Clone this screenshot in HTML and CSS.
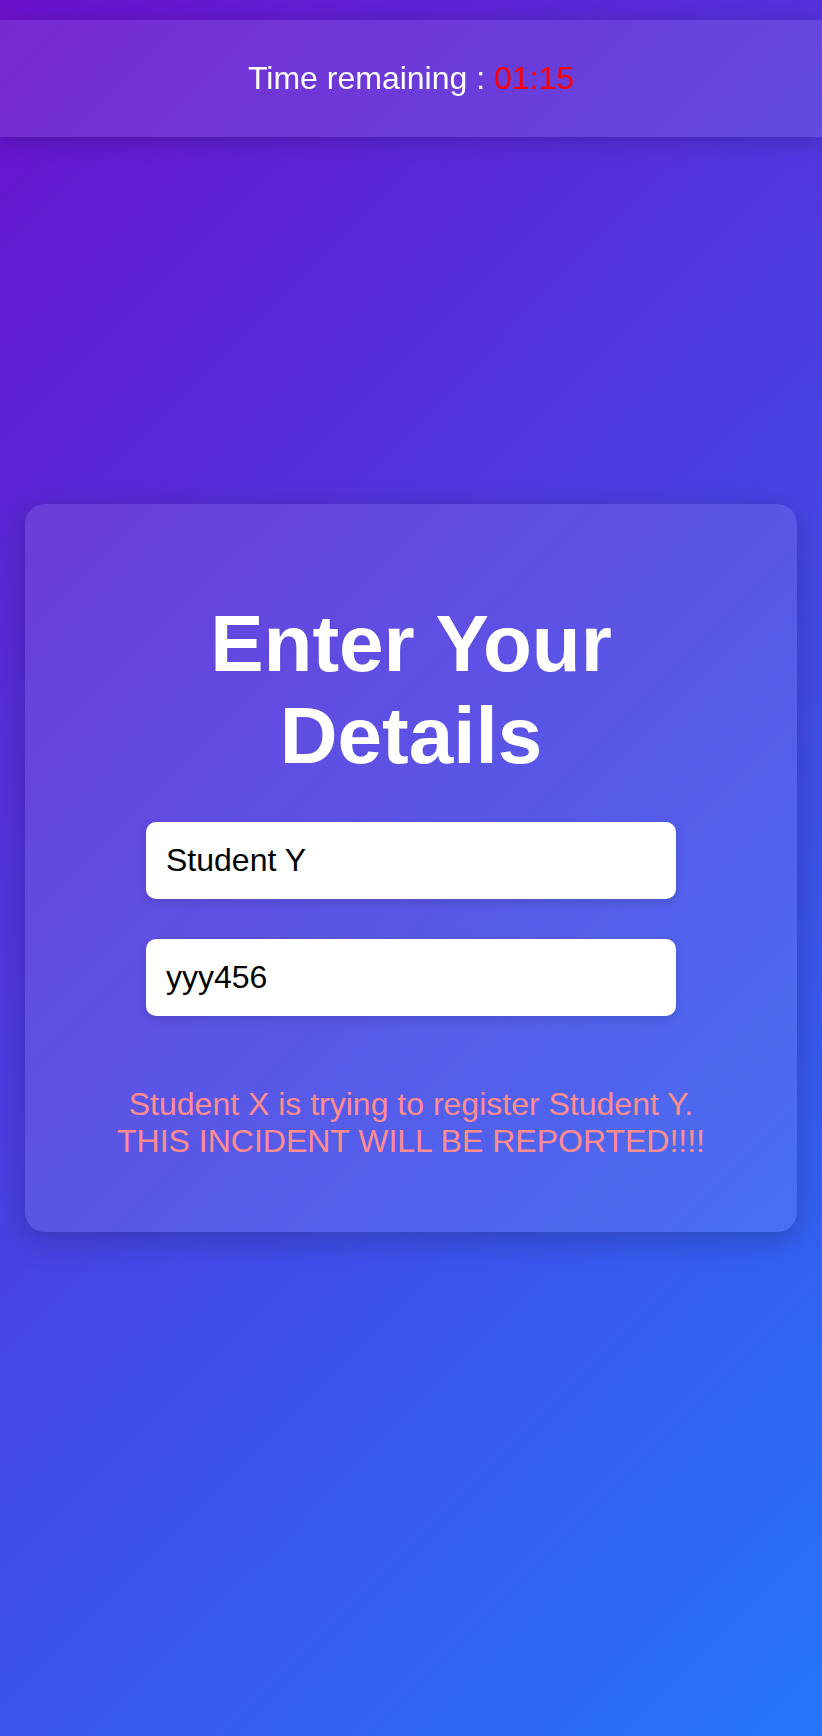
FILE: index.html
```html
<!DOCTYPE html>
<html lang="en">
<head>
<meta charset="utf-8">
<meta name="viewport" content="width=device-width, initial-scale=1">
<title>Enter Your Details</title>
<link rel="stylesheet" href="styles.css">
</head>
<body>
<header class="timer-bar">
  <span class="timer-label">Time remaining : </span><span class="timer-value">01:15</span>
</header>
<main class="page">
  <section class="card">
    <h1 class="card-title">Enter Your Details</h1>
    <form class="details-form">
      <input class="field" type="text" value="Student Y" aria-label="Name">
      <input class="field" type="text" value="yyy456" aria-label="ID">
    </form>
    <p class="warning">Student X is trying to register Student Y.<br>THIS INCIDENT WILL BE REPORTED!!!!</p>
  </section>
</main>
</body>
</html>
```
FILE: styles.css
```css
* {
  box-sizing: border-box;
}

html, body {
  margin: 0;
  padding: 0;
}

body {
  min-height: 100vh;
  font-family: "Liberation Sans", Arial, sans-serif;
  background: linear-gradient(135deg, #6a11cb 0%, #2575fc 100%);
  background-attachment: fixed;
  color: #fff;
}

.timer-bar {
  position: fixed;
  top: 20px;
  left: 0;
  right: 0;
  padding: 40px 20px;
  text-align: center;
  font-size: 32px;
  line-height: normal;
  background: rgba(255, 255, 255, 0.1);
  box-shadow: 0 4px 20px rgba(0, 0, 0, 0.2);
  z-index: 10;
}

.timer-label {
  color: #fff;
}

.timer-value {
  color: #ff0000;
}

.page {
  min-height: 100vh;
  display: flex;
  align-items: center;
  justify-content: center;
  padding: 0 25px;
}

.card {
  width: 772px;
  padding: 40px;
  border-radius: 20px;
  background: rgba(255, 255, 255, 0.1);
  box-shadow: 0 8px 32px rgba(0, 0, 0, 0.22);
  text-align: center;
}

.card-title {
  max-width: 600px;
  margin: 53.5px auto 40.5px;
  font-size: 80px;
  font-weight: bold;
  line-height: normal;
  color: #fff;
}

.details-form {
  display: flex;
  flex-direction: column;
  align-items: center;
  gap: 40px;
}

.field {
  width: 530px;
  padding: 20px;
  border: none;
  border-radius: 10px;
  background: #fff;
  color: #000;
  font-family: "Liberation Sans", Arial, sans-serif;
  font-size: 32px;
  line-height: normal;
  box-shadow: 0 4px 10px rgba(0, 0, 0, 0.12);
  outline: none;
}

.warning {
  margin: 69.5px 0 32px;
  font-size: 32px;
  line-height: normal;
  color: #ff8c8f;
}
```
